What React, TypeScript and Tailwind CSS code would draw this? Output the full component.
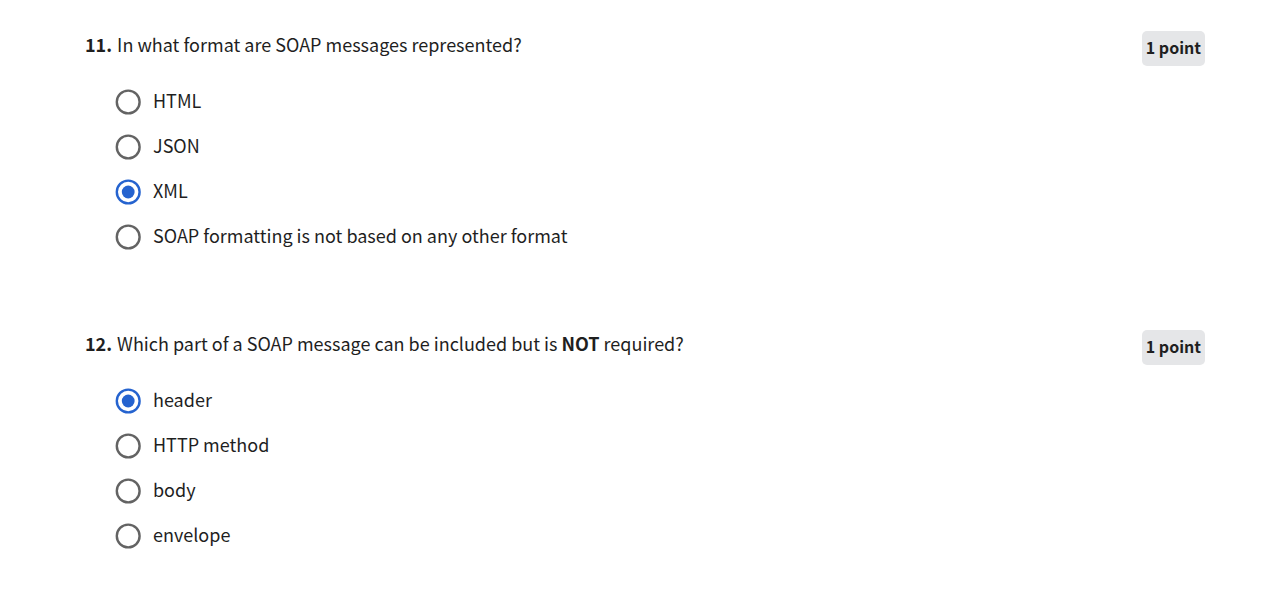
import type { ReactNode } from "react";

type Question = { id: number; prompt: ReactNode; options: string[]; answer: string };

const questions: Question[] = [
  {
    id: 11,
    prompt: "In what format are SOAP messages represented?",
    options: ["HTML", "JSON", "XML", "SOAP formatting is not based on any other format"],
    answer: "XML",
  },
  {
    id: 12,
    prompt: (
      <>
        Which part of a SOAP message can be included but is <strong className="font-bold">NOT</strong> required?
      </>
    ),
    options: ["header", "HTTP method", "body", "envelope"],
    answer: "header",
  },
];

function Option({ name, label, checked }: { name: string; label: string; checked: boolean }) {
  return (
    <label className="flex items-start gap-3 leading-[22px]">
      <span className="grid size-[26px] shrink-0">
        <input
          type="radio"
          name={name}
          defaultChecked={checked}
          className="peer col-start-1 row-start-1 m-0 size-[26px] appearance-none rounded-full"
        />
        <svg
          viewBox="0 0 26 26"
          aria-hidden="true"
          className="pointer-events-none col-start-1 row-start-1 size-[26px] text-[#636363] peer-checked:text-[#2563cf] peer-checked:[&_.dot]:opacity-100"
        >
          <circle cx="13.2" cy="13" r="11.4" fill="none" stroke="currentColor" strokeWidth="2.4" />
          <circle className="dot opacity-0" cx="13.2" cy="13" r="6.4" fill="currentColor" />
        </svg>
      </span>
      <span>{label}</span>
    </label>
  );
}

function QuestionBlock({ question }: { question: Question }) {
  const promptId = `question-${question.id}`;
  return (
    <section className="flex items-start justify-between">
      <div role="radiogroup" aria-labelledby={promptId}>
        <div id={promptId} className="flex gap-[5px] leading-[26px]">
          <span className="font-bold">{question.id}.</span>
          <p>{question.prompt}</p>
        </div>
        <div className="mt-8 ml-[30px] flex flex-col gap-[19px]">
          {question.options.map((option) => (
            <Option key={option} name={promptId} label={option} checked={option === question.answer} />
          ))}
        </div>
      </div>
      <span className="shrink-0 rounded-[5px] bg-[#e5e6e8] px-1 pb-0.5 text-base leading-[33px] font-bold">
        1 point
      </span>
    </section>
  );
}

export default function App() {
  return (
    <main className="flex flex-col gap-20 bg-white pt-[31px] pr-[75px] pb-11 pl-[85px] font-['Noto_Sans_CJK_SC','Noto_Sans',sans-serif] text-lg text-[#1f1f1f]">
      {questions.map((question) => (
        <QuestionBlock key={question.id} question={question} />
      ))}
    </main>
  );
}
